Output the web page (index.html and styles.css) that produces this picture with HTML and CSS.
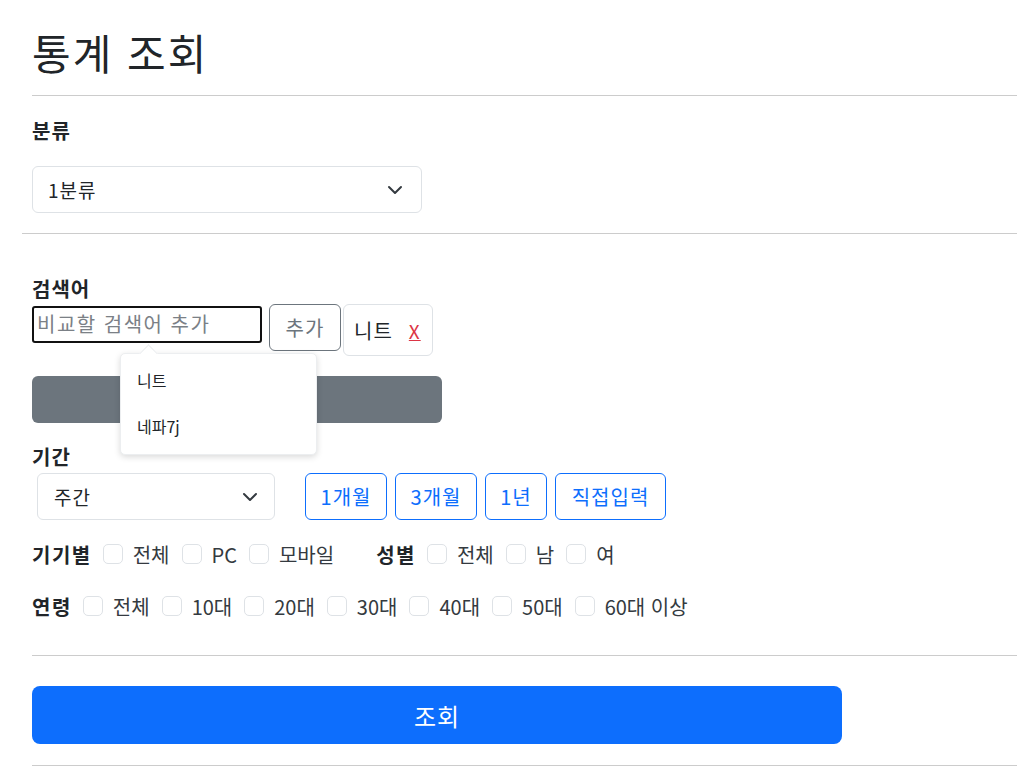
FILE: index.html
```html
<!DOCTYPE html>
<html lang="ko">
<head>
<meta charset="utf-8">
<link rel="stylesheet" href="styles.css">
</head>
<body>
<div class="page">
  <h1 class="title">통계 조회</h1>
  <hr class="rule">
  <div class="field">
    <div class="label">분류</div>
    <div class="select sel-cat"><span>1분류</span><svg class="chev" viewBox="0 0 16 16" width="16" height="16"><path d="M2 5l6 6 6-6" fill="none" stroke="#343a40" stroke-width="2" stroke-linecap="round" stroke-linejoin="round"/></svg></div>
  </div>
  <hr class="rule rule-wide">
  <div class="search">
    <div class="label">검색어</div>
    <div class="search-row">
      <div class="input">비교할 검색어 추가</div>
      <div class="btn-add">추가</div>
      <div class="tag"><span>니트</span><span class="tag-x">X</span></div>
    </div>
    <div class="grey-bar"></div>
    <div class="dropdown">
      <div class="dd-item">니트</div>
      <div class="dd-item">네파7j</div>
    </div>
  </div>
  <div class="period">
    <div class="label">기간</div>
    <div class="period-row">
      <div class="select sel-period"><span>주간</span><svg class="chev" viewBox="0 0 16 16" width="16" height="16"><path d="M2 5l6 6 6-6" fill="none" stroke="#343a40" stroke-width="2" stroke-linecap="round" stroke-linejoin="round"/></svg></div>
      <div class="btns">
        <div class="btn-o w1">1개월</div>
        <div class="btn-o w1">3개월</div>
        <div class="btn-o w2">1년</div>
        <div class="btn-o w3">직접입력</div>
      </div>
    </div>
  </div>
  <div class="checks">
    <span class="clabel">기기별</span>
    <span class="cb"></span><span class="ct">전체</span>
    <span class="cb"></span><span class="ct">PC</span>
    <span class="cb"></span><span class="ct">모바일</span>
    <span class="clabel gap-l">성별</span>
    <span class="cb"></span><span class="ct">전체</span>
    <span class="cb"></span><span class="ct">남</span>
    <span class="cb"></span><span class="ct">여</span>
  </div>
  <div class="checks">
    <span class="clabel">연령</span>
    <span class="cb"></span><span class="ct">전체</span>
    <span class="cb"></span><span class="ct">10대</span>
    <span class="cb"></span><span class="ct">20대</span>
    <span class="cb"></span><span class="ct">30대</span>
    <span class="cb"></span><span class="ct">40대</span>
    <span class="cb"></span><span class="ct">50대</span>
    <span class="cb"></span><span class="ct">60대 이상</span>
  </div>
  <hr class="rule rule-3">
  <div class="submit">조회</div>
  <hr class="rule rule-4">
</div>
</body>
</html>
```

FILE: styles.css
```css
* { box-sizing: border-box; }
html, body { margin: 0; padding: 0; background: #fff; }
body {
  font-family: "Noto Sans CJK KR", "Noto Sans", sans-serif;
  color: #212529;
  font-size: 16px;
  overflow: hidden;
}
.page { padding-left: 32px; width: 1017px; }
.title {
  margin: 0;
  padding-top: 27px;
  font-size: 42px;
  font-weight: 400;
  letter-spacing: 2px;
  line-height: 50px;
  height: 95px;
}
.rule {
  border: 0;
  border-top: 1px solid #cccccc;
  margin: 0;
  width: 985px;
}
.rule-wide { margin-left: -10px; width: 995px; }
.field { padding-top: 23px; height: 137px; }
.label { font-weight: 700; font-size: 20px; line-height: 24px; letter-spacing: 1px; }
.select {
  display: flex;
  align-items: center;
  justify-content: space-between;
  border: 1px solid #dee2e6;
  border-radius: 6px;
  height: 47px;
  padding: 0 18px 0 15px;
  font-size: 19px;
  letter-spacing: 1px;
  background: #fff;
}
.sel-cat { width: 390px; margin-top: 23px; }
.chev { display: block; }
.search { position: relative; padding-top: 43px; height: 211px; }
.search-row { display: flex; align-items: flex-start; margin-top: 3px; }
.input {
  width: 230px;
  height: 37px;
  margin-top: 2px;
  border: 2px solid #111;
  border-radius: 3px;
  padding-left: 3px;
  font-size: 20px;
  letter-spacing: 1.5px;
  line-height: 32px;
  color: #7b8086;
  white-space: nowrap;
  overflow: hidden;
}
.btn-add {
  margin-left: 7px;
  width: 72px;
  height: 47px;
  border: 1px solid #6c757d;
  border-radius: 6px;
  color: #6c757d;
  font-size: 20px;
  letter-spacing: 1px;
  display: flex; align-items: center; justify-content: center;
}
.tag {
  margin-left: 2px;
  width: 90px;
  height: 52px;
  border: 1px solid #dee2e6;
  border-radius: 6px;
  display: flex; align-items: center;
  padding-left: 10px;
  font-size: 20px;
  letter-spacing: 1px;
}
.tag-x { margin-left: 16px; color: #dc3545; text-decoration: underline; font-size: 19px; }
.grey-bar {
  margin-top: 20px;
  width: 410px;
  height: 47px;
  background: #6c757d;
  border-radius: 6px;
}
.dropdown {
  position: absolute;
  left: 88px;
  top: 119px;
  width: 197px;
  height: 102px;
  background: #fff;
  border: 1px solid #eceef0;
  border-radius: 5px;
  box-shadow: 0 2px 6px rgba(0,0,0,0.15);
  padding-top: 14px;
}
.dropdown::before {
  content: "";
  position: absolute;
  top: -7px;
  left: 21px;
  width: 12px;
  height: 12px;
  background: #fff;
  border-left: 1px solid #eceef0;
  border-top: 1px solid #eceef0;
  transform: rotate(45deg);
}
.dd-item { padding-left: 16px; font-size: 16px; line-height: 24px; height: 46px; }
.period-row { display: flex; align-items: flex-start; margin-top: 4px; }
.sel-period { width: 238px; margin-left: 5px; padding-left: 16px; padding-right: 16px; }
.btns { display: flex; gap: 8px; margin-left: 30px; }
.btn-o {
  height: 47px;
  border: 1px solid #0d6efd;
  border-radius: 6px;
  color: #0d6efd;
  font-size: 20px;
  letter-spacing: 1px;
  display: flex; align-items: center; justify-content: center;
}
.w1 { width: 82px; }
.w2 { width: 62px; }
.w3 { width: 111px; }
.checks {
  display: flex;
  align-items: center;
  margin-top: 16px;
  height: 36px;
  font-size: 20px;
  letter-spacing: 0;
  color: #343a40;
  white-space: nowrap;
}
.clabel { font-weight: 700; font-size: 20px; letter-spacing: 1.5px; color: #212529; margin-right: 11px; }
.gap-l { margin-left: 30px; }
.cb {
  flex: none;
  width: 20px; height: 20px;
  border: 1px solid #dee2e6;
  border-radius: 5px;
  margin-right: 10px;
}
.ct { margin-right: 12px; }
.rule-3 { margin-top: 31px; }
.submit {
  margin-top: 30px;
  width: 810px;
  height: 58px;
  background: #0d6efd;
  border-radius: 8px;
  color: #fff;
  font-size: 24px;
  letter-spacing: 1px;
  display: flex; align-items: center; justify-content: center;
}
.rule-4 { margin-top: 21px; width: 985px; }
```
